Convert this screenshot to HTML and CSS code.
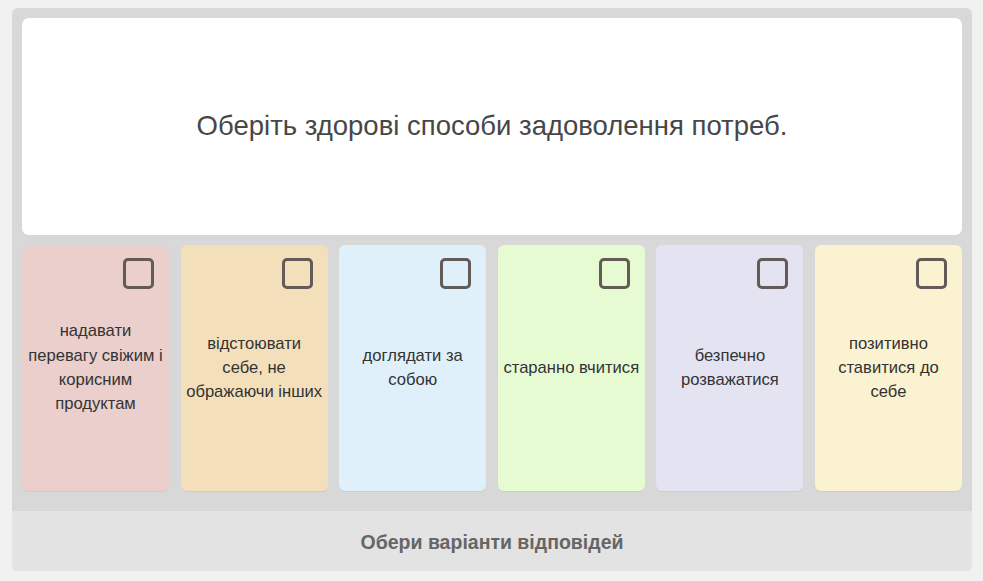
FILE: index.html
```html
<!DOCTYPE html>
<html lang="uk">
<head>
<meta charset="utf-8">
<link rel="stylesheet" href="styles.css">
</head>
<body>
<div class="quiz">
  <div class="board">
    <div class="question">Оберіть здорові способи задоволення потреб.</div>
    <div class="options">
      <div class="option c1"><span class="box"></span><p>надавати перевагу свіжим і корисним продуктам</p></div>
      <div class="option c2"><span class="box"></span><p>відстоювати себе, не ображаючи інших</p></div>
      <div class="option c3"><span class="box"></span><p>доглядати за собою</p></div>
      <div class="option c4"><span class="box"></span><p>старанно вчитися</p></div>
      <div class="option c5"><span class="box"></span><p>безпечно розважатися</p></div>
      <div class="option c6"><span class="box"></span><p>позитивно ставитися до себе</p></div>
    </div>
  </div>
  <div class="footer">Обери варіанти відповідей</div>
</div>
</body>
</html>
```
FILE: styles.css
```css
html, body {
  margin: 0;
  padding: 0;
  background: #f1f1f1;
  font-family: "Liberation Sans", Arial, sans-serif;
}
.quiz {
  margin: 8px 11px 0 12px;
  width: 960px;
  height: 563px;
  border-radius: 6px;
  overflow: hidden;
  background: #d8d8d8;
  display: flex;
  flex-direction: column;
}
.board {
  flex: 1;
  padding: 10px 10px 0 10px;
  display: flex;
  flex-direction: column;
}
.question {
  height: 217px;
  background: #fff;
  border-radius: 7px;
  display: flex;
  align-items: center;
  justify-content: center;
  font-size: 27.5px;
  color: #474747;
  padding-bottom: 2px;
  box-sizing: border-box;
}
.options {
  margin-top: 10px;
  height: 246px;
  display: grid;
  grid-template-columns: repeat(6, 1fr);
  gap: 11.6px;
}
.option {
  position: relative;
  border-radius: 6px;
  display: flex;
  align-items: center;
  justify-content: center;
  box-shadow: 0 1px 1px rgba(0,0,0,0.06);
}
.option p {
  margin: 0;
  width: 137.6px;
  flex: none;
  text-align: center;
  font-size: 16.6px;
  line-height: 24.3px;
  color: #333;
}
.box {
  position: absolute;
  top: 13px;
  right: 15px;
  width: 25px;
  height: 25px;
  border: 3px solid #645a58;
  border-radius: 5px;
}
.c1 { background: #eacfcd; }
.c2 { background: #f3e0bb; }
.c3 { background: #dff0fb; }
.c4 { background: #e7fbd3; }
.c5 { background: #e4e3f1; }
.c6 { background: #faf2d0; }
.footer {
  height: 60px;
  background: #e3e3e3;
  display: flex;
  align-items: center;
  justify-content: center;
  font-size: 19.5px;
  font-weight: bold;
  color: #666;
  padding-top: 2px;
  box-sizing: border-box;
}
```
